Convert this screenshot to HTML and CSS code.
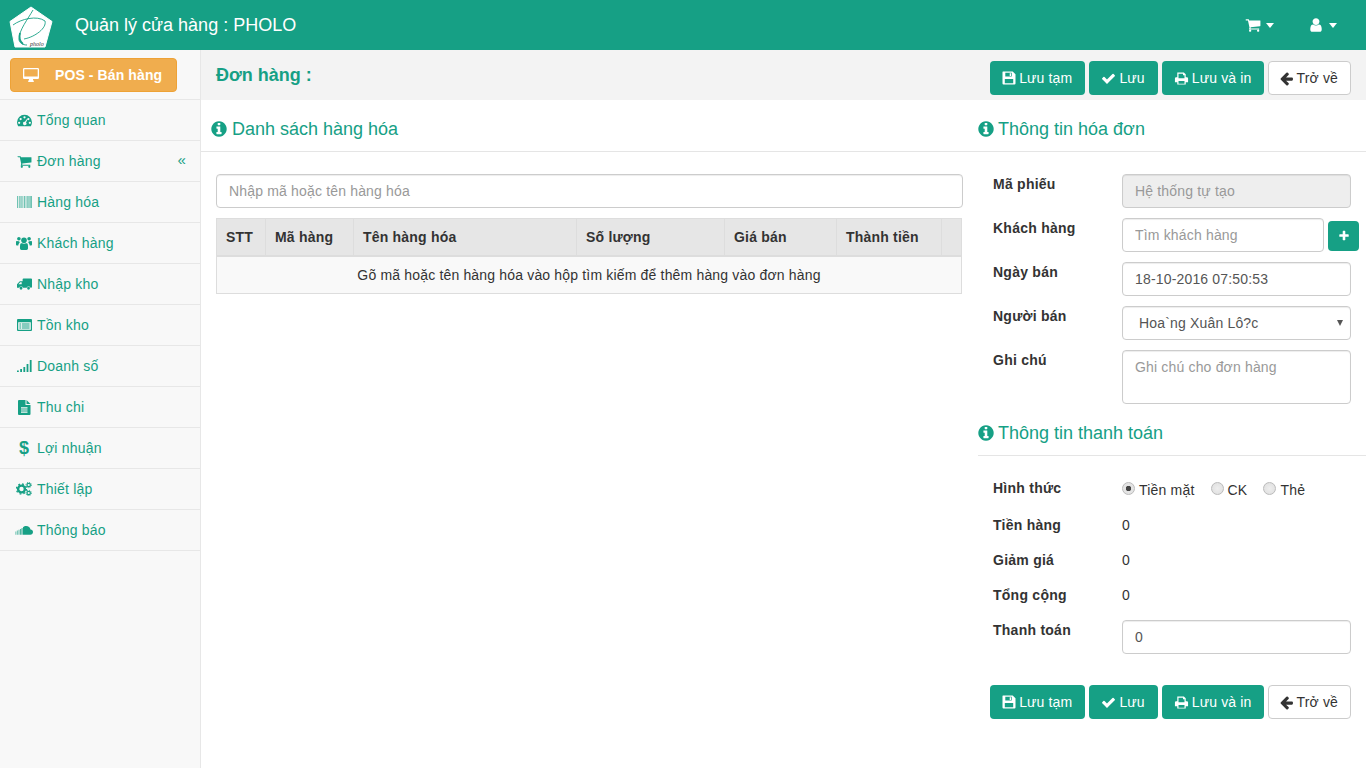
FILE: index.html
```html
<!DOCTYPE html>
<html lang="vi">
<head>
    <meta charset="utf-8">
    <title>Quản lý cửa hàng : PHOLO</title>
    <link rel="stylesheet" href="styles.css">
</head>
<body>
    <svg class="sprite" xmlns="http://www.w3.org/2000/svg">
        <symbol id="i-info" viewBox="0 0 1792 1792"><path d="M1152 1376v-160q0-14-9-23t-23-9h-96v-512q0-14-9-23t-23-9h-320q-14 0-23 9t-9 23v160q0 14 9 23t23 9h96v320h-96q-14 0-23 9t-9 23v160q0 14 9 23t23 9h448q14 0 23-9t9-23zm-128-896v-160q0-14-9-23t-23-9h-192q-14 0-23 9t-9 23v160q0 14 9 23t23 9h192q14 0 23-9t9-23zm640 416q0 209-103 385.5t-279.5 279.5-385.5 103-385.5-103-279.5-279.5-103-385.5 103-385.5 279.5-279.5 385.5-103 385.5 103 279.5 279.5 103 385.5z"/></symbol>
        <symbol id="i-cart" viewBox="0 0 1792 1792"><path d="M704 1536q0 52-38 90t-90 38-90-38-38-90 38-90 90-38 90 38 38 90zm896 0q0 52-38 90t-90 38-90-38-38-90 38-90 90-38 90 38 38 90zm128-1088v512q0 24-16.5 42.5t-40.5 21.5l-1044 122q13 60 13 70 0 16-24 64h920q26 0 45 19t19 45-19 45-45 19h-1024q-26 0-45-19t-19-45q0-11 8-31.5t16-36 21.5-40 15.5-29.5l-177-823h-204q-26 0-45-19t-19-45 19-45 45-19h256q16 0 28.5 6.5t19.5 15.5 13 24.5 8 26 5.5 29.5 4.5 26h1201q26 0 45 19t19 45z"/></symbol>
        <symbol id="i-user" viewBox="0 0 1792 1792"><path d="M1536 1399q0 109-62.5 187t-150.5 78h-854q-88 0-150.5-78t-62.5-187q0-85 8.5-160.5t31.5-152 58.5-131 94-89 134.5-34.5q131 128 313 128t313-128q76 0 134.5 34.5t94 89 58.5 131 31.5 152 8.5 160.5zm-256-887q0 159-112.5 271.5t-271.5 112.5-271.5-112.5-112.5-271.5 112.5-271.5 271.5-112.5 271.5 112.5 112.5 271.5z"/></symbol>
        <symbol id="i-check" viewBox="0 0 1792 1792"><path d="M1671 566q0 40-28 68l-724 724-136 136q-28 28-68 28t-68-28l-136-136-362-362q-28-28-28-68t28-68l136-136q28-28 68-28t68 28l294 295 656-657q28-28 68-28t68 28l136 136q28 28 28 68z"/></symbol>
        <symbol id="i-plus" viewBox="0 0 1792 1792"><path d="M1600 736v192q0 40-28 68t-68 28h-416v416q0 40-28 68t-68 28h-192q-40 0-68-28t-28-68v-416h-416q-40 0-68-28t-28-68v-192q0-40 28-68t68-28h416v-416q0-40 28-68t68-28h192q40 0 68 28t28 68v416h416q40 0 68 28t28 68z"/></symbol>
        <symbol id="i-back" viewBox="0 0 1792 1792"><path d="M1664 896v128q0 53-32.5 90.5t-84.5 37.5h-704l293 294q38 36 38 90t-38 90l-75 76q-38 38-90 38-53 0-91-38l-651-652q-37-37-37-90 0-52 37-91l651-650q38-38 91-38 52 0 90 38l75 74q38 38 38 91t-38 91l-293 293h704q52 0 84.5 37.5t32.5 90.5z"/></symbol>
        <symbol id="i-save" viewBox="0 0 14 14"><path fill-rule="evenodd" d="M1 .5h9.700L13.500 3.300v9.200a1 1 0 0 1-1 1H1.500a1 1 0 0 1-1-1V1a.5.5 0 0 1 .5-.5zM3.300 1.800v3.700h6.400V1.800zM7.700 2.300h1.300v2.700H7.700zM2.800 8v4.300h8.400V8z"/></symbol>
        <symbol id="i-print" viewBox="0 0 16 16"><path fill-rule="evenodd" d="M3.500 1.500h7l2 2v3.200h1.200a1.300 1.300 0 0 1 1.300 1.300v4h-2.500v2.500h-9V12H1V8a1.300 1.300 0 0 1 1.300-1.300h1.200zM4.800 2.800v5h6.400V4.600H9.600V2.800zM4.800 10.600v2.900h6.400v-2.900z"/></symbol>
        <symbol id="i-desktop" viewBox="0 0 16 14"><path fill-rule="evenodd" d="M1.200 0h13.600A1.200 1.200 0 0 1 16 1.200v8.600a1.200 1.200 0 0 1-1.200 1.200H10c0 1 .5 1.600.8 2v1H5.200v-1c.3-.4.8-1 .8-2H1.200A1.200 1.200 0 0 1 0 9.800V1.200A1.200 1.200 0 0 1 1.200 0zM1.300 1.300v7.200h13.400V1.300z"/></symbol>
        <symbol id="i-gauge" viewBox="0 0 16 16"><path fill-rule="evenodd" d="M8 2a7.800 7.800 0 0 1 8 7.800c0 1.600-.5 3-1.200 4.200H1.200C.5 12.800 0 11.400 0 9.800A7.800 7.800 0 0 1 8 2zM8 3.400a1.200 1.200 0 1 0 0 2.400 1.200 1.200 0 0 0 0-2.400zM3.900 5.200a1.200 1.200 0 1 0 0 2.400 1.200 1.200 0 0 0 0-2.400zM12.100 5.200a1.200 1.200 0 1 0 0 2.400 1.200 1.200 0 0 0 0-2.400zM2.300 9.300a1.200 1.200 0 1 0 0 2.400 1.200 1.200 0 0 0 0-2.400zM13.700 9.300a1.200 1.200 0 1 0 0 2.400 1.200 1.200 0 0 0 0-2.400zM10.600 6.300 8.400 9.400a1.800 1.800 0 1 0 1.200.6l1.700-3.400z"/></symbol>
        <symbol id="i-barcode" viewBox="0 0 15 12"><path d="M0 0h1.200v12H0zM2 0h.8v12H2zM3.400 0h1.300v12H3.400zM5.400 0h.8v12h-.8zM6.900 0h1.200v12H6.900zM8.700 0h.8v12h-.8zM10 0h.8v12H10zM11.300 0h1.400v12h-1.400zM13.200 0H15v12h-1.800z" opacity=".6"/></symbol>
        <symbol id="i-users" viewBox="0 0 16 14"><circle cx="8" cy="4.200" r="2.800"/><circle cx="2.900" cy="2.700" r="1.800"/><circle cx="13.100" cy="2.700" r="1.800"/><path d="M4.200 8.500C4.400 7.500 5 7 6 7.200c1.300.6 2.700.6 4 0 1-.2 1.600.3 1.800 1.300.3 1.600.2 3.600.2 3.800 0 1-.7 1.700-1.500 1.700h-5c-.8 0-1.500-.7-1.500-1.700 0-.2-.1-2.200.2-3.800zM0 5.800C0 5 .6 4.700 1.300 5c.8.400 1.500.4 2 .2-.1.900.3 1.200.6 1.500-.9.400-1.400 1.100-1.600 2.900H.9C.3 9.600 0 9.200 0 8.500zM16 5.800c0-.8-.6-1.100-1.300-.8-.8.400-1.500.4-2 .2.100.9-.3 1.200-.6 1.500.9.400 1.400 1.100 1.600 2.900h1.400c.6 0 .9-.4.900-1.100z"/></symbol>
        <symbol id="i-truck" viewBox="0 0 16 12"><path fill-rule="evenodd" d="M6 0h9a1 1 0 0 1 1 1v8a1 1 0 0 1-1 1h-.6a2.100 2.100 0 0 0-4.100 0H6.400a2.100 2.100 0 0 0-4.100 0H0V6.200L3 3h3V1a1 1 0 0 1 1-1zM3.500 4.200 1.500 6.300H5V4.200zM4.300 9a1.500 1.500 0 1 0 0 3 1.500 1.500 0 0 0 0-3zM12.300 9a1.500 1.500 0 1 0 0 3 1.500 1.500 0 0 0 0-3z"/></symbol>
        <symbol id="i-list" viewBox="0 0 15 12"><path fill-rule="evenodd" d="M1 0h13a1 1 0 0 1 1 1v10a1 1 0 0 1-1 1H1a1 1 0 0 1-1-1V1a1 1 0 0 1 1-1zM1.200 3.200v7.600h12.600V3.200zM2.400 4.400h1.800v1H2.400zM5 4.400h7.600v1H5zM2.400 6.500h1.800v1H2.400zM5 6.500h7.600v1H5zM2.400 8.600h1.800v1H2.400zM5 8.600h7.600v1H5z"/></symbol>
        <symbol id="i-signal" viewBox="0 0 15 12"><path d="M0 10.500h1.800V12H0zM3.200 9h1.800v3H3.200zM6.400 7h1.800v5H6.400zM9.600 4h1.800v8H9.600zM12.800 0h1.800v12h-1.800z"/></symbol>
        <symbol id="i-file" viewBox="0 0 13 15"><path fill-rule="evenodd" d="M1 0h6.500v5H12.500v9a1 1 0 0 1-1 1H1a1 1 0 0 1-1-1V1a1 1 0 0 1 1-1zM3 7.200v1.200h6.500V7.200zM3 9.400v1.200h6.500V9.400zM3 11.600v1.200h6.500v-1.200zM8.500 0l4 4h-4z"/></symbol>
        <symbol id="i-cogs" viewBox="0 0 16 14"><circle cx="5.500" cy="7" r="3.400" fill="none" stroke="currentColor" stroke-width="2.400"/><circle cx="5.500" cy="7" r="5" fill="none" stroke="currentColor" stroke-width="1.400" stroke-dasharray="1.800 2.130"/><circle cx="12.700" cy="3" r="1.700" fill="none" stroke="currentColor" stroke-width="1.200"/><circle cx="12.700" cy="3" r="2.700" fill="none" stroke="currentColor" stroke-width=".9" stroke-dasharray="1.100 1.020"/><circle cx="12.700" cy="11" r="1.700" fill="none" stroke="currentColor" stroke-width="1.200"/><circle cx="12.700" cy="11" r="2.700" fill="none" stroke="currentColor" stroke-width=".9" stroke-dasharray="1.100 1.020"/></symbol>
        <symbol id="i-cloud" viewBox="0 0 18 9"><path d="M8 1.300C8.800.5 10 0 11.200 0c2.200 0 4 1.500 4.300 3.400C17 3.400 18 4.600 18 6c0 1.500-1.100 2.700-2.700 2.700H8z"/><path opacity=".75" d="M6.500 2h1.200v6.700H6.500zM5 3h1.200v5.700H5z"/><path opacity=".55" d="M3.400 3.800h1.200v4.900H3.400zM1.800 4.500H3v4.200H1.800z"/><path opacity=".4" d="M0 5.500h1.400v3.200H0z"/></symbol>
    </svg>

    <header class="topbar">
        <div class="brand">
            <svg class="logo" viewBox="0 0 44 42">
                <path class="logoShape" d="M22 1 43 15.500 36 41 6 41 1 15.500z"/>
                <path class="logoLine" d="M4 19C12 13 28 9 36 15 38 22 26 31 15 33"/>
                <path class="logoLine" d="M24 4C19 13 10 24 10 33 10 37 14 39 18 39"/>
                <path class="logoStem" d="M11 27C10 31 10 35 14 38"/>
                <text class="logoText" x="21" y="39.500">pholo</text>
            </svg>
            <span class="brandName">Quản lý cửa hàng : PHOLO</span>
        </div>
        <div class="topMenus">
            <span class="topMenu"><svg class="icon"><use href="#i-cart"/></svg><i class="caret"></i></span>
            <span class="topMenu"><svg class="icon"><use href="#i-user"/></svg><i class="caret"></i></span>
        </div>
    </header>

    <div class="wrapper">
        <aside class="sidebar">
            <div class="posBox">
                <a class="posButton"><svg class="posIcon"><use href="#i-desktop"/></svg>POS - Bán hàng</a>
            </div>
            <ul class="menu">
                <li class="menuItem"><span class="menuIcon"><svg class="iconGauge"><use href="#i-gauge"/></svg></span>Tổng quan</li>
                <li class="menuItem"><span class="menuIcon"><svg class="iconMenuCart"><use href="#i-cart"/></svg></span>Đơn hàng<span class="menuArrow">«</span></li>
                <li class="menuItem"><span class="menuIcon"><svg class="iconBarcode"><use href="#i-barcode"/></svg></span>Hàng hóa</li>
                <li class="menuItem"><span class="menuIcon"><svg class="iconUsers"><use href="#i-users"/></svg></span>Khách hàng</li>
                <li class="menuItem"><span class="menuIcon"><svg class="iconTruck"><use href="#i-truck"/></svg></span>Nhập kho</li>
                <li class="menuItem"><span class="menuIcon"><svg class="iconList"><use href="#i-list"/></svg></span>Tồn kho</li>
                <li class="menuItem"><span class="menuIcon"><svg class="iconSignal"><use href="#i-signal"/></svg></span>Doanh số</li>
                <li class="menuItem"><span class="menuIcon"><svg class="iconFile"><use href="#i-file"/></svg></span>Thu chi</li>
                <li class="menuItem"><span class="menuIcon menuDollar">$</span>Lợi nhuận</li>
                <li class="menuItem"><span class="menuIcon"><svg class="iconCogs"><use href="#i-cogs"/></svg></span>Thiết lập</li>
                <li class="menuItem"><span class="menuIcon"><svg class="iconCloud"><use href="#i-cloud"/></svg></span>Thông báo</li>
            </ul>
        </aside>

        <main class="mainArea">
            <div class="pageBar">
                <h2 class="pageTitle">Đơn hàng :</h2>
                <div class="actions">
                    <a class="btn btnGreen"><svg class="btnIcon iconSave"><use href="#i-save"/></svg>Lưu tạm</a>
                    <a class="btn btnGreen"><svg class="btnIcon"><use href="#i-check"/></svg>Lưu</a>
                    <a class="btn btnGreen btnPrint"><svg class="btnIcon"><use href="#i-print"/></svg>Lưu và in</a>
                    <a class="btn btnWhite"><svg class="btnIcon"><use href="#i-back"/></svg>Trở về</a>
                </div>
            </div>

            <div class="columns">
                <section class="leftCol">
                    <h3 class="sectionTitle"><svg class="infoIcon"><use href="#i-info"/></svg>Danh sách hàng hóa</h3>
                    <div class="leftBody">
                        <input class="field searchField" type="text" placeholder="Nhập mã hoặc tên hàng hóa">
                        <table class="itemTable">
                            <thead>
                                <tr>
                                    <th class="colStt">STT</th>
                                    <th class="colCode">Mã hàng</th>
                                    <th class="colName">Tên hàng hóa</th>
                                    <th class="colQty">Số lượng</th>
                                    <th class="colPrice">Giá bán</th>
                                    <th class="colTotal">Thành tiền</th>
                                    <th></th>
                                </tr>
                            </thead>
                            <tbody>
                                <tr><td colspan="7">Gõ mã hoặc tên hàng hóa vào hộp tìm kiếm để thêm hàng vào đơn hàng</td></tr>
                            </tbody>
                        </table>
                    </div>
                </section>

                <section class="rightCol">
                    <h3 class="sectionTitle"><svg class="infoIcon"><use href="#i-info"/></svg>Thông tin hóa đơn</h3>
                    <div class="formBlock">
                        <div class="formRow">
                            <label class="formLabel">Mã phiếu</label>
                            <input class="field fieldDisabled" type="text" placeholder="Hệ thống tự tạo" disabled>
                        </div>
                        <div class="formRow">
                            <label class="formLabel">Khách hàng</label>
                            <input class="field customerField" type="text" placeholder="Tìm khách hàng">
                            <a class="plusButton"><svg class="plusIcon"><use href="#i-plus"/></svg></a>
                        </div>
                        <div class="formRow">
                            <label class="formLabel">Ngày bán</label>
                            <input class="field" type="text" value="18-10-2016 07:50:53">
                        </div>
                        <div class="formRow">
                            <label class="formLabel">Người bán</label>
                            <div class="selectWrap">
                                <select class="field selectField"><option>Hoa`ng Xuân Lô?c</option></select>
                            </div>
                        </div>
                        <div class="formRow noteRow">
                            <label class="formLabel">Ghi chú</label>
                            <textarea class="field noteField" placeholder="Ghi chú cho đơn hàng"></textarea>
                        </div>
                    </div>

                    <h3 class="sectionTitle"><svg class="infoIcon"><use href="#i-info"/></svg>Thông tin thanh toán</h3>
                    <div class="payBlock">
                        <div class="payRow payMethods">
                            <label class="formLabel">Hình thức</label>
                            <label class="radioLabel"><input class="radio" type="radio" name="pay" checked>Tiền mặt</label>
                            <label class="radioLabel"><input class="radio" type="radio" name="pay">CK</label>
                            <label class="radioLabel"><input class="radio" type="radio" name="pay">Thẻ</label>
                        </div>
                        <div class="payRow"><label class="formLabel">Tiền hàng</label><span>0</span></div>
                        <div class="payRow"><label class="formLabel">Giảm giá</label><span>0</span></div>
                        <div class="payRow"><label class="formLabel">Tổng cộng</label><span>0</span></div>
                        <div class="formRow">
                            <label class="formLabel">Thanh toán</label>
                            <input class="field" type="text" value="0">
                        </div>
                    </div>

                    <div class="actions bottomActions">
                        <a class="btn btnGreen"><svg class="btnIcon iconSave"><use href="#i-save"/></svg>Lưu tạm</a>
                        <a class="btn btnGreen"><svg class="btnIcon"><use href="#i-check"/></svg>Lưu</a>
                        <a class="btn btnGreen btnPrint"><svg class="btnIcon"><use href="#i-print"/></svg>Lưu và in</a>
                        <a class="btn btnWhite"><svg class="btnIcon"><use href="#i-back"/></svg>Trở về</a>
                    </div>
                </section>
            </div>
        </main>
    </div>
</body>
</html>
```

FILE: styles.css
```css
* {
    box-sizing: border-box;
}
body {
    margin: 0;
    font-family: "Liberation Sans", Arial, sans-serif;
    font-size: 14px;
    line-height: 20px;
    color: #333;
    background-color: #fff;
}
.sprite {
    display: none;
}
.topbar {
    display: flex;
    justify-content: space-between;
    align-items: center;
    height: 50px;
    background-color: #16a085;
    color: #fff;
}
.brand {
    display: flex;
    align-items: center;
}
.logo {
    width: 44px;
    height: 42px;
    margin: 4px 0 0 9px;
}
.logoShape {
    fill: #fff;
    stroke: #fff;
    stroke-width: 1;
    stroke-linejoin: round;
}
.logoLine {
    fill: none;
    stroke: #16a085;
    stroke-width: 0.9;
}
.logoStem {
    fill: none;
    stroke: #16a085;
    stroke-width: 1.8;
}
.logoText {
    font-family: "Liberation Serif", serif;
    font-size: 6px;
    font-style: italic;
    fill: #333;
}
.brandName {
    margin-left: 22px;
    font-size: 18px;
}
.topMenus {
    display: flex;
    align-items: center;
    margin-right: 29px;
}
.topMenu {
    display: flex;
    align-items: center;
}
.topMenu:first-child {
    margin-right: 34px;
}
.icon {
    width: 16px;
    height: 16px;
    fill: #fff;
}
.caret {
    width: 0;
    height: 0;
    margin-left: 5px;
    border-top: 5px solid #fff;
    border-left: 4.5px solid transparent;
    border-right: 4.5px solid transparent;
}
.wrapper {
    display: flex;
    min-height: 718px;
}
.sidebar {
    flex: 0 0 201px;
    background-color: #f8f8f8;
    border-right: 1px solid #e7e7e7;
}
.posBox {
    height: 50px;
    padding: 8px 0 0 10px;
    border-bottom: 1px solid #e7e7e7;
}
.posButton {
    display: flex;
    align-items: center;
    width: 167px;
    height: 34px;
    padding-left: 12px;
    background-color: #f0ad4e;
    border: 1px solid #eea236;
    border-radius: 4px;
    color: #fff;
    font-weight: bold;
    letter-spacing: 0.1px;
}
.posIcon {
    width: 16px;
    height: 14px;
    margin-right: 16px;
    fill: #fff;
}
.menu {
    margin: 0;
    padding: 0;
    list-style: none;
}
.menuItem {
    position: relative;
    display: flex;
    align-items: center;
    height: 41px;
    padding-left: 15px;
    border-bottom: 1px solid #e7e7e7;
    color: #16a085;
    letter-spacing: 0.2px;
}
.menuIcon {
    display: flex;
    justify-content: center;
    align-items: center;
    width: 18px;
    margin-right: 4px;
}
.menuIcon svg {
    fill: #16a085;
    color: #16a085;
}
.menuDollar {
    font-weight: bold;
    font-size: 18px;
}
.menuArrow {
    position: absolute;
    top: 9px;
    right: 14px;
    font-size: 15px;
}
.iconGauge {
    width: 15px;
    height: 15px;
}
.iconMenuCart {
    width: 15px;
    height: 15px;
}
.iconBarcode {
    width: 15px;
    height: 12px;
}
.iconUsers {
    width: 16px;
    height: 14px;
}
.iconTruck {
    width: 15px;
    height: 12px;
}
.iconList {
    width: 15px;
    height: 12px;
}
.iconSignal {
    width: 15px;
    height: 12px;
}
.iconFile {
    width: 13px;
    height: 15px;
}
.iconCogs {
    width: 16px;
    height: 14px;
}
.iconCloud {
    width: 18px;
    height: 9px;
}
.mainArea {
    flex: 1;
    min-width: 0;
}
.pageBar {
    display: flex;
    justify-content: space-between;
    height: 50px;
    padding: 11px 15px 0;
    background-color: #f3f3f3;
}
.pageTitle {
    margin: 4px 0 0;
    font-size: 18px;
    color: #16a085;
}
.actions {
    display: flex;
    gap: 4px;
}
.btn {
    display: flex;
    align-items: center;
    height: 34px;
    padding: 0 12px 0 11px;
    border: 1px solid transparent;
    border-radius: 4px;
    letter-spacing: 0.15px;
}
.btnGreen {
    background-color: #16a085;
    color: #fff;
}
.btnPrint {
    padding-right: 11px;
}
.btnWhite {
    padding-left: 10px;
    background-color: #fff;
    border-color: #ccc;
    color: #333;
}
.btnIcon {
    width: 15px;
    height: 15px;
    margin-right: 3px;
    fill: currentColor;
}
.iconSave {
    width: 14px;
    height: 14px;
}
.columns {
    display: flex;
}
.leftCol {
    flex: 0 0 777px;
}
.rightCol {
    flex: 0 0 388px;
}
.sectionTitle {
    display: flex;
    align-items: center;
    height: 52px;
    margin: 0;
    padding-top: 6px;
    font-size: 18px;
    font-weight: normal;
    color: #16a085;
    border-bottom: 1px solid #e5e5e5;
}
.leftCol .sectionTitle {
    padding-left: 9px;
}
.infoIcon {
    width: 18px;
    height: 18px;
    margin-right: 3px;
    fill: #16a085;
}
.leftCol .infoIcon {
    margin-right: 4px;
}
.rightCol .infoIcon {
    margin-left: -1px;
}
.leftBody {
    padding: 22px 15px 0;
}
.field {
    display: block;
    width: 229px;
    height: 34px;
    padding: 6px 12px;
    background-color: #fff;
    border: 1px solid #ccc;
    border-radius: 4px;
    box-shadow: inset 0 1px 1px rgba(0,0,0,.075);
    font-family: inherit;
    font-size: 14px;
    line-height: 20px;
    color: #555;
    letter-spacing: 0.17px;
}
.field::placeholder {
    color: #999;
    opacity: 1;
}
.searchField {
    width: 747px;
}
.itemTable {
    width: 746px;
    margin-top: 10px;
    border-collapse: collapse;
    table-layout: fixed;
}
.itemTable th {
    height: 37px;
    padding: 8px 9px;
    text-align: left;
    background-color: #e6e6e6;
    border: 1px solid #ddd;
    border-bottom-width: 2px;
    letter-spacing: 0.2px;
}
.itemTable td {
    height: 37px;
    padding: 8px;
    text-align: center;
    background-color: #f9f9f9;
    border: 1px solid #ddd;
    letter-spacing: 0.17px;
}
.colStt {
    width: 49px;
}
.colCode {
    width: 88px;
}
.colName {
    width: 223px;
}
.colQty {
    width: 148px;
}
.colPrice {
    width: 112px;
}
.colTotal {
    width: 105px;
}
.formBlock {
    padding: 22px 15px 0;
}
.formRow {
    display: flex;
    margin-bottom: 10px;
}
.noteRow {
    margin-bottom: 0;
}
.formLabel {
    flex: 0 0 129px;
    font-weight: bold;
    letter-spacing: 0.25px;
}
.fieldDisabled {
    background-color: #eee;
}
.customerField {
    width: 202px;
}
.plusButton {
    display: flex;
    justify-content: center;
    align-items: center;
    flex: 0 0 31px;
    width: 31px;
    height: 30px;
    margin: 3px -23px 0 4px;
    background-color: #16a085;
    border-radius: 4px;
}
.plusIcon {
    width: 12px;
    height: 12px;
    fill: #fff;
}
.selectWrap {
    position: relative;
}
.selectWrap::after {
    content: "";
    position: absolute;
    top: 14px;
    right: 8px;
    border-top: 6px solid #555;
    border-left: 3px solid transparent;
    border-right: 3px solid transparent;
}
.selectField {
    appearance: none;
    padding-left: 16px;
}
.noteField {
    height: 54px;
    resize: none;
}
.payBlock {
    padding: 22px 15px 0;
}
.payRow {
    display: flex;
    align-items: flex-start;
    height: 35px;
}
.payMethods {
    height: 37px;
}
.radioLabel {
    display: flex;
    align-items: center;
    height: 24px;
    margin-right: 16px;
    letter-spacing: 0.2px;
}
.radio {
    appearance: none;
    width: 13px;
    height: 13px;
    margin: 0 4px 3px 0;
    border: 1px solid #bbb;
    border-radius: 50%;
    background: radial-gradient(#eee, #ddd);
}
.radio:checked {
    background: radial-gradient(#444 0, #444 2.5px, #e4e4e4 3px);
}
.bottomActions {
    justify-content: flex-end;
    margin: 31px 15px 0 0;
}
```
